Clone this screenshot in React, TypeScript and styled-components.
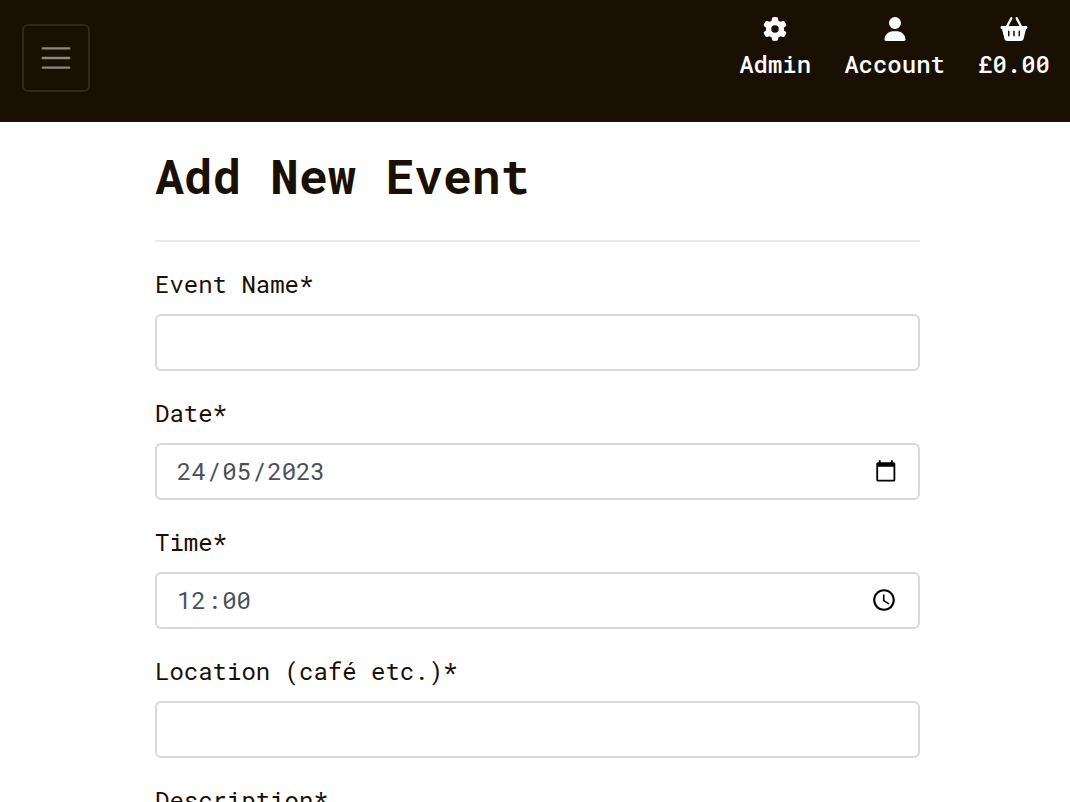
import React from "react";
import styled, { createGlobalStyle } from "styled-components";
import { FaGear, FaUser, FaBasketShopping } from "react-icons/fa6";

const GlobalStyle = createGlobalStyle`
  *, *::before, *::after { box-sizing: border-box; }
  html { overflow-x: hidden; }
  body {
    margin: 0;
    background: #fff;
    color: #1a0f03;
    font-family: "Roboto Mono", "DejaVu Sans Mono", monospace;
    font-size: 24px;
    line-height: 36px;
    -webkit-font-smoothing: antialiased;
  }
`;

const Header = styled.header`
  display: flex;
  justify-content: space-between;
  align-items: flex-start;
  min-height: 122px;
  padding: 11px 20px 24px 22px;
  background: #1a0f03;
`;

const MenuButton = styled.button`
  display: flex;
  align-items: center;
  justify-content: center;
  width: 68px;
  height: 68px;
  margin: 13px 0 0;
  padding: 0;
  background: transparent;
  border: 2px solid rgba(255, 255, 255, 0.1);
  border-radius: 6px;
  color: rgba(255, 255, 255, 0.5);
`;

const AccountNav = styled.nav`
  display: flex;
  gap: 33px;
`;

const NavLink = styled.a`
  display: flex;
  flex-direction: column;
  align-items: center;
  color: #fff;
  font-weight: 500;
  line-height: 34px;
  text-decoration: none;
`;

const NavIcon = styled.span`
  display: flex;
  align-items: center;
  height: 36px;

  svg {
    width: 28px;
    height: 24px;
  }
`;

const Main = styled.main`
  padding: 25px 150px 24px 155px;
`;

const Title = styled.h1`
  margin: 0;
  font-size: 48px;
  font-weight: 700;
  line-height: 58px;
`;

const Divider = styled.hr`
  height: 2px;
  margin: 35px 0 24px;
  border: 0;
  background: #ebebeb;
`;

const Form = styled.form`
  display: flex;
  flex-direction: column;
  gap: 24px;
`;

const Field = styled.div`
  display: flex;
  flex-direction: column;
  gap: 12px;
`;

const Input = styled.input`
  width: 100%;
  height: 57px;
  padding: 8px 18px;
  background: #fff;
  border: 2px solid #d5dade;
  border-radius: 6px;
  color: #495057;
  font: inherit;
`;

const TextArea = styled.textarea`
  width: 100%;
  padding: 8px 18px;
  border: 2px solid #d5dade;
  border-radius: 6px;
  color: #495057;
  font: inherit;
`;

const SegmentedBox = styled.div`
  display: flex;
  align-items: center;
  height: 57px;
  padding: 0 21px 2px 19px;
  border: 2px solid #d5dade;
  border-radius: 6px;
  color: #495057;
`;

const Segment = styled.input<{ $chars: number }>`
  box-sizing: content-box;
  width: ${(p) => p.$chars}ch;
  margin: 0;
  padding: 0 1px;
  background: transparent;
  border: 0;
  color: inherit;
  font: inherit;
`;

const PickerButton = styled.button`
  display: flex;
  margin: 0 0 0 auto;
  padding: 0;
  background: transparent;
  border: 0;
  color: #000;
`;

const CalendarIcon = () => (
  <svg width="24" height="24" viewBox="0 0 24 24" fill="currentColor" fillRule="evenodd">
    <path d="M5.800 1.200h1.900v2.100h10.200V1.200h1.900v2.100h.7c1 0 1.800.8 1.800 1.800v15.600c0 1-.8 1.800-1.800 1.800H5.100c-1 0-1.800-.8-1.800-1.800V5.100c0-1 .8-1.800 1.800-1.800h.7zM5.100 7.700v13h15.400v-13z" />
  </svg>
);

const ClockIcon = () => (
  <svg width="26" height="26" viewBox="0 0 24 24" fill="currentColor">
    <path d="M11.990 2C6.470 2 2 6.480 2 12s4.470 10 9.990 10C17.520 22 22 17.520 22 12S17.520 2 11.990 2zM12 20c-4.420 0-8-3.580-8-8s3.580-8 8-8 8 3.580 8 8-3.580 8-8 8zm.5-13H11v6l5.250 3.150.75-1.230-4.500-2.670z" />
  </svg>
);

type Part = { name: string; value: string };

type SegmentedProps = {
  id: string;
  label: string;
  separator: string;
  parts: Part[];
  pickerLabel: string;
  icon: React.ReactNode;
};

function SegmentedField({ id, label, separator, parts, pickerLabel, icon }: SegmentedProps) {
  return (
    <Field>
      <label htmlFor={id}>{label}</label>
      <SegmentedBox role="group" aria-label={label}>
        {parts.map((part, i) => (
          <React.Fragment key={part.name}>
            {i > 0 && <span>{separator}</span>}
            <Segment
              id={i === 0 ? id : `${id}-${part.name}`}
              aria-label={part.name}
              inputMode="numeric"
              maxLength={part.value.length}
              $chars={part.value.length}
              defaultValue={part.value}
            />
          </React.Fragment>
        ))}
        <PickerButton type="button" aria-label={pickerLabel}>{icon}</PickerButton>
      </SegmentedBox>
    </Field>
  );
}

function TextField({ id, label }: { id: string; label: string }) {
  return (
    <Field>
      <label htmlFor={id}>{label}</label>
      <Input id={id} type="text" />
    </Field>
  );
}

export default function App() {
  return (
    <>
      <GlobalStyle />
      <Header>
        <MenuButton type="button" aria-label="Toggle navigation">
          <svg width="36" height="36" viewBox="0 0 30 30" fill="none" stroke="currentColor" strokeWidth="2" strokeLinecap="round">
            <path d="M4 7h22M4 15h22M4 23h22" />
          </svg>
        </MenuButton>
        <AccountNav>
          <NavLink href="#admin"><NavIcon><FaGear /></NavIcon>Admin</NavLink>
          <NavLink href="#account"><NavIcon><FaUser /></NavIcon>Account</NavLink>
          <NavLink href="#basket"><NavIcon><FaBasketShopping /></NavIcon>£0.00</NavLink>
        </AccountNav>
      </Header>
      <Main>
        <Title>Add New Event</Title>
        <Divider />
        <Form>
          <TextField id="name" label="Event Name*" />
          <SegmentedField
            id="date"
            label="Date*"
            separator="/"
            parts={[
              { name: "day", value: "24" },
              { name: "month", value: "05" },
              { name: "year", value: "2023" },
            ]}
            pickerLabel="Show date picker"
            icon={<CalendarIcon />}
          />
          <SegmentedField
            id="time"
            label="Time*"
            separator=":"
            parts={[
              { name: "hours", value: "12" },
              { name: "minutes", value: "00" },
            ]}
            pickerLabel="Show time picker"
            icon={<ClockIcon />}
          />
          <TextField id="location" label="Location (café etc.)*" />
          <Field>
            <label htmlFor="description">Description*</label>
            <TextArea id="description" rows={4} />
          </Field>
        </Form>
      </Main>
    </>
  );
}
